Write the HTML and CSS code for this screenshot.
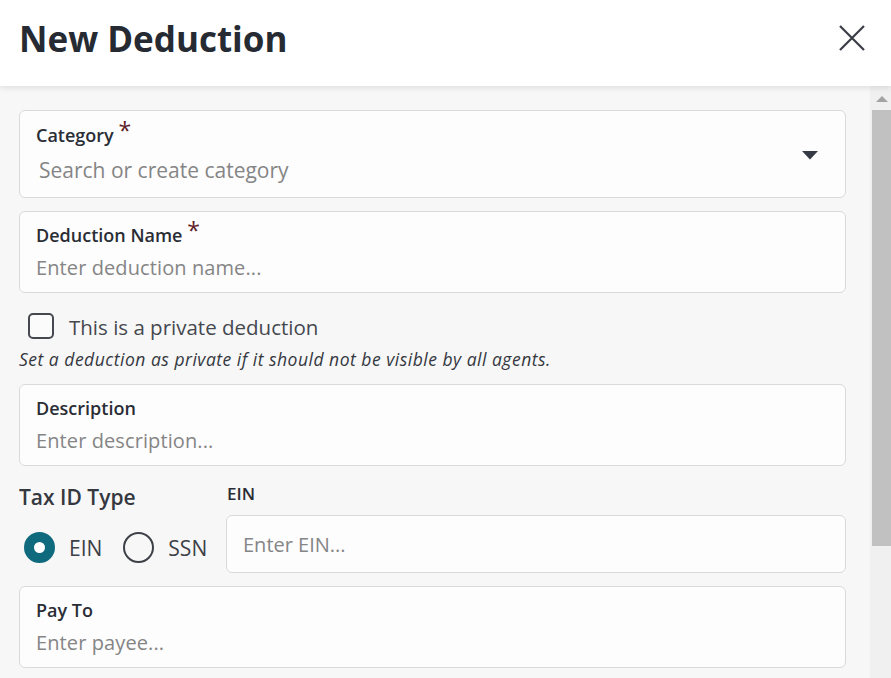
FILE: index.html
```html
<!DOCTYPE html>
<html lang="en">
<head>
<meta charset="utf-8">
<title>New Deduction</title>
<link rel="stylesheet" href="styles.css">
</head>
<body>
<div class="modal">
  <header class="modal-header">
    <h1 class="title">New Deduction</h1>
    <button class="close" aria-label="Close">
      <svg width="28" height="28" viewBox="0 0 28 28"><path d="M2 2 L26 26 M26 2 L2 26" stroke="#3a3d45" stroke-width="2.2" fill="none"/></svg>
    </button>
  </header>
  <div class="modal-body">
    <div class="content">
      <div class="field field-select">
        <div class="field-main">
          <div class="label">Category <span class="req">*</span></div>
          <div class="placeholder big">Search or create category</div>
        </div>
        <svg class="caret" width="16" height="9" viewBox="0 0 16 9"><path d="M0 0 H16 L8 8.5 Z" fill="#353a44"/></svg>
      </div>
      <div class="field field-text">
        <div class="label">Deduction Name <span class="req">*</span></div>
        <div class="placeholder">Enter deduction name...</div>
      </div>
      <label class="check-row">
        <span class="checkbox"></span>
        <span class="check-label">This is a private deduction</span>
      </label>
      <p class="help">Set a deduction as private if it should not be visible by all agents.</p>
      <div class="field field-text field-desc">
        <div class="label">Description</div>
        <div class="placeholder">Enter description...</div>
      </div>
      <div class="tax-row">
        <div class="tax-type">
          <div class="tax-label">Tax ID Type</div>
          <div class="radios">
            <span class="radio checked"></span><span class="radio-label">EIN</span>
            <span class="radio"></span><span class="radio-label">SSN</span>
          </div>
        </div>
        <div class="tax-id">
          <div class="small-label">EIN</div>
          <div class="input">Enter EIN...</div>
        </div>
      </div>
      <div class="field field-text">
        <div class="label">Pay To</div>
        <div class="placeholder">Enter payee...</div>
      </div>
    </div>
    <div class="scrollbar">
      <div class="arrow-up"></div>
      <div class="thumb"></div>
    </div>
  </div>
</div>
</body>
</html>
```
FILE: styles.css
```css
* { box-sizing: border-box; }
html, body { margin: 0; padding: 0; }
body {
  font-family: "Open Sans", "Lato", sans-serif;
  background: #f7f7f7;
  color: #2a2d35;
  width: 891px;
  height: 678px;
  overflow: hidden;
}
.modal { display: flex; flex-direction: column; height: 678px; }
.modal-header {
  height: 86px;
  background: #fff;
  display: flex;
  align-items: center;
  justify-content: space-between;
  padding: 0 24px 0 19px;
  box-shadow: 0 2px 6px rgba(0,0,0,0.10);
  position: relative;
  z-index: 1;
}
.title {
  margin: 0;
  font-size: 35px;
  font-weight: 700;
  color: #262a33;
  margin-top: -10px;
}
.close {
  border: 0;
  background: none;
  padding: 0;
  width: 28px;
  height: 28px;
  margin-top: -10px;
  margin-right: 1px;
}
.close svg { display: block; }
.modal-body { flex: 1; display: flex; overflow: hidden; }
.content {
  flex: 1;
  padding: 24px 24px 0 19px;
}
.field {
  background: #fdfdfd;
  border: 1px solid #dadada;
  border-radius: 6px;
}
.field-select {
  height: 88px;
  display: flex;
  align-items: center;
  padding: 0 27px 0 16px;
}
.field-main { flex: 1; }
.field-select .label { margin-top: -1px; }
.caret { margin-top: 2px; }
.field-text {
  height: 82px;
  padding: 13px 16px 0 16px;
  margin-top: 13px;
}
.label {
  font-size: 18px;
  font-weight: 600;
  color: #2a2d35;
  line-height: 20px;
}
.req {
  color: #5e1c28;
  font-weight: 400;
  font-size: 23px;
  position: relative;
  top: -3px;
  line-height: 0;
}
.placeholder {
  font-size: 20px;
  letter-spacing: 0.1px;
  color: #858585;
  line-height: 24px;
  margin-top: 11px;
}
.placeholder.big { font-size: 21px; letter-spacing: 0; padding-left: 3px; margin-top: 13px; }
.check-row {
  display: flex;
  align-items: center;
  height: 26px;
  margin-top: 20px;
  padding-left: 9px;
}
.checkbox {
  width: 26px;
  height: 26px;
  border: 2px solid #45484f;
  border-radius: 5px;
  background: #fbfbfb;
}
.check-label {
  margin-left: 15px;
  font-size: 20.5px;
  color: #45484f;
  position: relative;
  top: 1px;
}
.help {
  margin: 9px 0 0 0;
  font-size: 17.5px;
  letter-spacing: 0.5px;
  font-style: italic;
  color: #35383f;
  line-height: 22px;
}
.field-desc { margin-top: 14px; }
.tax-row {
  display: flex;
  margin-top: 18px;
}
.tax-type { width: 207px; }
.tax-label {
  font-size: 21px;
  font-weight: 600;
  color: #35383f;
  line-height: 24px;
  margin-top: 1px;
}
.radios {
  display: flex;
  align-items: center;
  margin-top: 23px;
  padding-left: 5px;
}
.radio {
  width: 31px;
  height: 31px;
  border-radius: 50%;
  border: 2px solid #3d4047;
  flex: none;
}
.radio.checked {
  border: 10px solid #0f6a7d;
  background: #fff;
}
.radio-label {
  font-size: 21px;
  color: #3d4047;
  margin-left: 14px;
  margin-right: 21px;
}
.tax-id { flex: 1; }
.small-label {
  font-size: 17px;
  font-weight: 600;
  color: #2a2d35;
  line-height: 20px;
  margin-left: 1px;
}
.input {
  margin-top: 11px;
  height: 58px;
  background: #fdfdfd;
  border: 1px solid #dadada;
  border-radius: 6px;
  display: flex;
  align-items: center;
  padding-left: 16px;
  font-size: 20px;
  color: #858585;
}
.scrollbar {
  width: 21px;
  background: #f0f0f0;
  display: flex;
  flex-direction: column;
  align-items: flex-end;
}
.arrow-up {
  align-self: center;
  width: 0;
  height: 0;
  border-left: 6px solid transparent;
  border-right: 6px solid transparent;
  border-bottom: 6px solid #a3a3a3;
  margin-top: 10px;
  margin-left: 2px;
}
.thumb {
  width: 19px;
  height: 436px;
  background: #c1c1c1;
  margin-top: 8px;
}
```
